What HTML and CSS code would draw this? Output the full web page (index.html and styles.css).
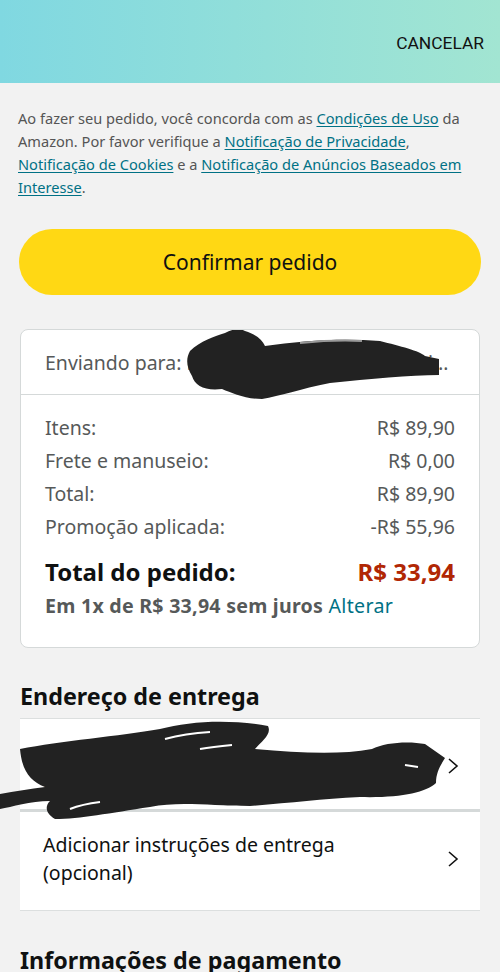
FILE: index.html
```html
<!DOCTYPE html>
<html lang="pt-BR">

<head>
    <meta charset="UTF-8">
    <meta name="viewport" content="width=device-width, initial-scale=1.0">
    <title>Revisar pedido</title>
    <link rel="stylesheet" href="styles.css">
</head>

<body>
    <header class="top-bar">
        <span class="cancel">CANCELAR</span>
    </header>

    <main class="page">
        <p class="legal">
            Ao fazer seu pedido, você concorda com as <a href="#">Condições de Uso</a> da<br>
            Amazon. Por favor verifique a <a href="#">Notificação de Privacidade</a>,<br>
            <a href="#">Notificação de Cookies</a> e a <a href="#">Notificação de Anúncios Baseados em<br>
            Interesse</a>.
        </p>

        <button class="confirm-btn">Confirmar pedido</button>

        <!-- Order summary -->
        <section class="summary-card">
            <div class="ship-to">
                <span>Enviando para:</span>
                <span class="hidden-name">Fulano de Tal da Silva Pereira Santos</span>
                <svg class="scribble scribble-name" viewBox="181 329 290 80" aria-hidden="true">
                    <path d="M190,350 C200,340 215,335 225,332 C232,328 240,327 245,330 C255,333 262,338 265,345 C300,340 340,337 380,340 C400,345 420,350 425,355 L439,358 L439,374 C410,374 370,378 330,382 C300,388 280,395 262,398 C245,398 232,392 222,388 C205,390 195,385 192,375 C186,365 186,357 190,350 Z" />
                    <path d="M300,342 C320,340 345,339 362,340" class="scribble-edge" />
                </svg>
            </div>
            <div class="totals">
                <div class="line"><span>Itens:</span><span>R$ 89,90</span></div>
                <div class="line"><span>Frete e manuseio:</span><span>R$ 0,00</span></div>
                <div class="line"><span>Total:</span><span>R$ 89,90</span></div>
                <div class="line"><span>Promoção aplicada:</span><span>-R$ 55,96</span></div>
                <div class="line grand"><span>Total do pedido:</span><span class="price">R$ 33,94</span></div>
                <p class="installments">Em 1x de R$ 33,94 sem juros <a href="#">Alterar</a></p>
            </div>
        </section>

        <!-- Delivery address -->
        <h2 class="section-title">Endereço de entrega</h2>
        <div class="list-box">
            <div class="list-row address-row">
                <div class="address-text">
                    <span>Fulano de Tal</span>
                    <span>Rua Exemplo, 123 - Bairro, Cidade, Estado 00000-000</span>
                </div>
                <svg class="chevron" viewBox="0 0 12 18" aria-hidden="true"><path d="M2 2 L10 9 L2 16" /></svg>
                <svg class="scribble scribble-address" viewBox="0 713 460 110" aria-hidden="true">
                    <path d="M20,748 C60,740 120,735 160,728 C190,720 230,718 268,725 C272,733 262,740 255,748 C300,752 340,754 372,748 C385,741 410,740 425,743 L445,757 C440,765 436,772 436,782 C425,792 400,797 360,796 C320,798 290,802 250,805 C210,805 180,800 150,806 C110,812 80,818 55,818 C45,812 45,805 50,800 C30,800 12,806 0,808 L0,793 C15,790 30,788 45,786 C30,780 22,770 20,748 Z" />
                    <path d="M165,738 C180,734 195,732 210,731" class="scribble-gap" />
                    <path d="M200,748 C212,746 222,745 232,744" class="scribble-gap" />
                    <path d="M405,764 L418,766" class="scribble-gap" />
                    <path d="M70,808 C80,804 92,802 100,801" class="scribble-gap" />
                </svg>
            </div>
            <div class="list-row instructions-row">
                <div>Adicionar instruções de entrega<br>(opcional)</div>
                <svg class="chevron" viewBox="0 0 12 18" aria-hidden="true"><path d="M2 2 L10 9 L2 16" /></svg>
            </div>
        </div>

        <h2 class="section-title payment-title">Informações de pagamento</h2>
    </main>
</body>

</html>
```

FILE: styles.css
```css
/* Basic Reset */
* {
    margin: 0;
    padding: 0;
    box-sizing: border-box;
}

body {
    font-family: "Noto Sans", Arial, sans-serif;
    background-color: #f2f2f2;
    color: #0f1111;
    overflow: hidden;
}

a {
    color: #007185;
}

/* Header */
.top-bar {
    height: 83px;
    background: linear-gradient(90deg, #80d8e1, #a2e5d2);
    display: flex;
    justify-content: flex-end;
    align-items: center;
    padding: 2px 16px 0 0;
}

.cancel {
    font-family: Roboto, sans-serif;
    font-size: 17.4px;
    color: #111;
}

.page {
    padding: 24px 20px 0;
}

/* Legal notice */
.legal {
    font-size: 14.6px;
    line-height: 23px;
    color: #555;
    margin-left: -2px;
    white-space: nowrap;
}

.legal a {
    text-decoration: underline;
    text-underline-offset: 2px;
}

/* Confirm button */
.confirm-btn {
    display: block;
    width: 462px;
    height: 66px;
    margin: 30px 0 0 -1px;
    border: none;
    border-radius: 33px;
    background-color: #ffd814;
    font-family: "Noto Sans", Arial, sans-serif;
    font-size: 21px;
    color: #0f1111;
}

/* Summary card */
.summary-card {
    margin-top: 34px;
    background-color: #fff;
    border: 1px solid #d5d9d9;
    border-radius: 8px;
}

.ship-to {
    position: relative;
    height: 65px;
    padding: 0 24px;
    display: flex;
    align-items: center;
    gap: 5px;
    font-size: 19.5px;
    color: #565959;
    border-bottom: 1px solid #d5d9d9;
    white-space: nowrap;
}

.hidden-name {
    flex: 1;
    min-width: 0;
    overflow: hidden;
    text-overflow: ellipsis;
}

.totals {
    padding: 16px 24px 28px;
}

.line {
    display: flex;
    justify-content: space-between;
    font-size: 19.5px;
    line-height: 33px;
    color: #565959;
}

.line.grand {
    margin-top: 12px;
    font-size: 24px;
    font-weight: bold;
    line-height: 34px;
    color: #0f1111;
}

.line .price {
    color: #b12704;
}

.installments {
    margin-top: 3px;
    font-size: 19.6px;
    line-height: 27px;
    font-weight: bold;
    letter-spacing: 0.25px;
    color: #565959;
}

.installments a {
    font-weight: normal;
    letter-spacing: 0.3px;
    text-decoration: none;
}

/* Delivery */
.section-title {
    margin-top: 33px;
    font-size: 23.3px;
    line-height: 31px;
    font-weight: bold;
    color: #0f1111;
}

.list-box {
    margin-top: 6px;
    background-color: #fff;
    border-top: 1px solid #dcdfdf;
    border-bottom: 1px solid #dcdfdf;
}

.list-row {
    position: relative;
    display: flex;
    justify-content: space-between;
    align-items: center;
    gap: 8px;
    padding: 0 21px 0 23px;
    font-size: 19.5px;
    line-height: 28px;
    color: #0f1111;
}

.address-row {
    height: 93px;
    padding-top: 4px;
    border-bottom: 3px solid #d5d9d9;
}

.address-text {
    display: flex;
    flex-direction: column;
    min-width: 0;
    white-space: nowrap;
}

.address-text span {
    overflow: hidden;
    text-overflow: ellipsis;
}

.instructions-row {
    height: 98px;
    padding-bottom: 5px;
}

.chevron {
    width: 12px;
    height: 18px;
    flex-shrink: 0;
}

.chevron path {
    fill: none;
    stroke: #111;
    stroke-width: 1.6;
}

/* Redaction scribbles drawn over the personal data */
.scribble {
    position: absolute;
    fill: #222;
}

.scribble-edge {
    fill: none;
    stroke: #999;
    stroke-width: 2;
}

.scribble-gap {
    fill: none;
    stroke: #fff;
    stroke-width: 2;
}

.scribble-name {
    left: 160px;
    top: 0;
    width: 290px;
    height: 80px;
}

.scribble-address {
    left: -20px;
    top: -5px;
    width: 460px;
    height: 110px;
}

.payment-title {
    margin-top: 34px;
}
```
